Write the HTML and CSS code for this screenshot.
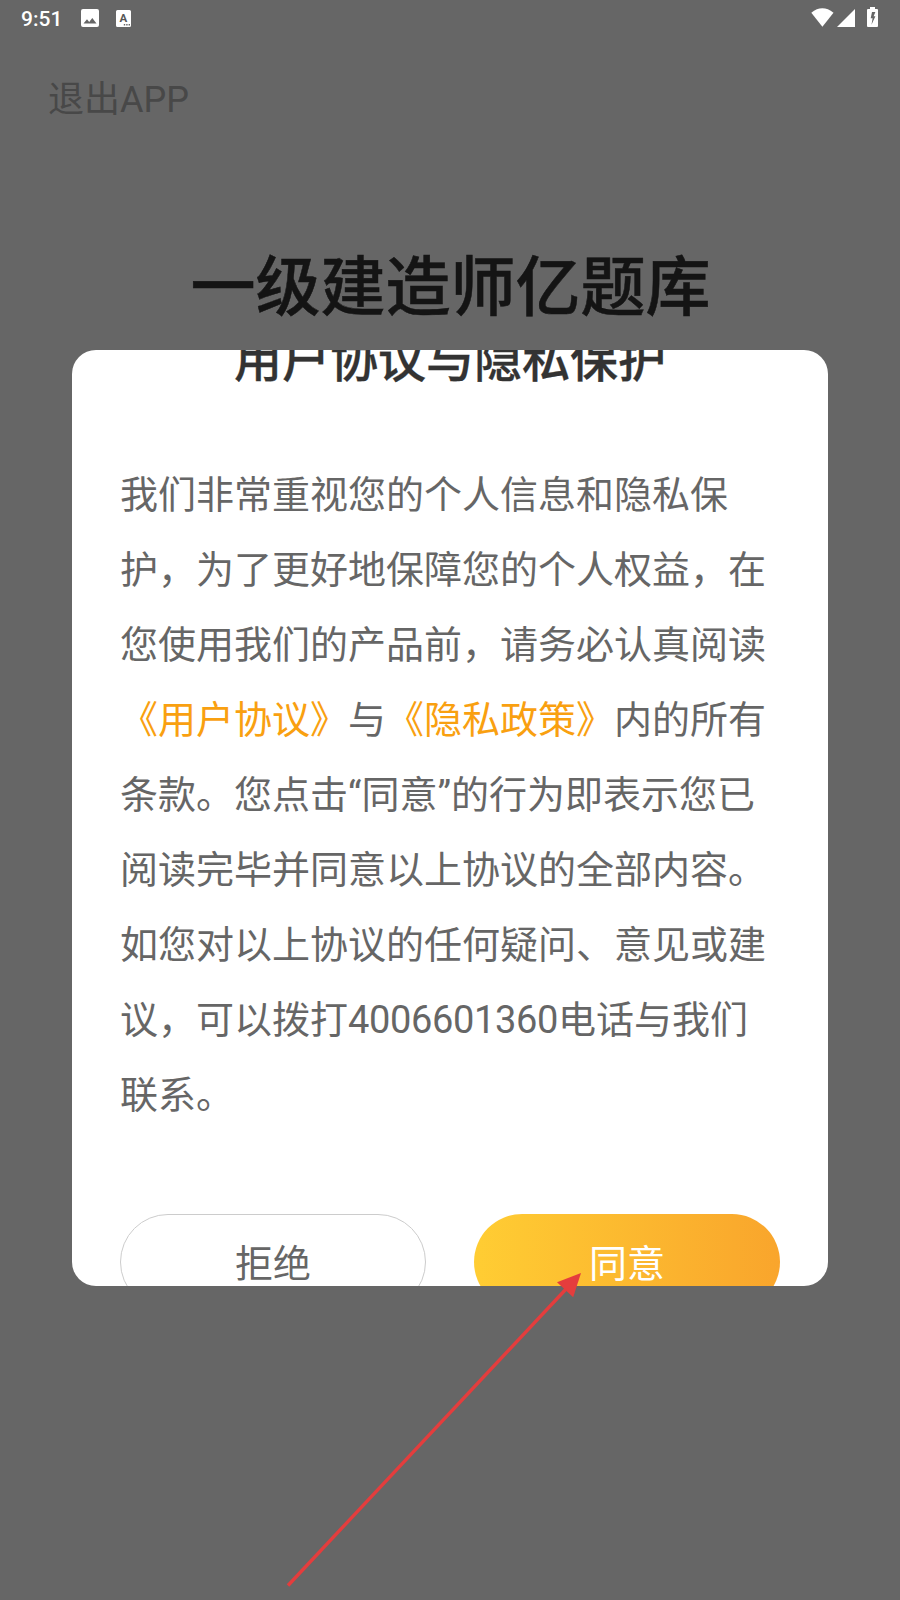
FILE: index.html
```html
<!DOCTYPE html>
<html lang="zh-CN">
  <head>
    <meta charset="UTF-8" />
    <meta name="viewport" content="width=device-width, initial-scale=1.0" />
    <title>一级建造师亿题库</title>

    <link rel="stylesheet" href="styles.css">
  </head>

  <body>
    <div class="screen">
      <header class="status-bar">
        <span class="time">9:51</span>
        <svg class="icon-image" viewBox="0 0 18 18">
          <path fill-rule="evenodd" d="M2 0H16Q18 0 18 2V16Q18 18 16 18H2Q0 18 0 16V2Q0 0 2 0ZM2.5 14.5H15.5L11.3 9L8.2 13L6 10.3Z" />
        </svg>
        <svg class="icon-lang" viewBox="0 0 15 17">
          <path fill-rule="evenodd" d="M1.5 0H13.5Q15 0 15 1.5V15.5Q15 17 13.5 17H1.5Q0 17 0 15.5V1.5Q0 0 1.5 0ZM7.8 14H9.2V15.4H7.8ZM10.2 14H11.6V15.4H10.2ZM12.6 14H14V15.4H12.6Z" />
          <text x="7.3" y="12">A</text>
        </svg>

        <div class="status-right">
          <svg class="icon-wifi" viewBox="0 0 23 19">
            <path d="M.3 4.7Q11.3-4 22.5 4.7L11.4 18.8Z" />
          </svg>
          <svg class="icon-signal" viewBox="0 0 18 18">
            <path d="M18 0V18H0Z" />
          </svg>
          <svg class="icon-battery" viewBox="0 0 11 20">
            <path fill-rule="evenodd" d="M3 0H8V2H10Q11 2 11 3V19Q11 20 10 20H1Q0 20 0 19V3Q0 2 1 2H3ZM5 5L3.7 11.3H5.6L4.5 17.8L8.4 9.3H6.6L8.4 5Z" />
          </svg>
        </div>
      </header>

      <div class="exit">退出APP</div>
      <h1>一级建造师亿题库</h1>

      <div class="dialog">
        <h2>用户协议与隐私保护</h2>
        <p>
          我们非常重视您的个人信息和隐私保<br />护，为了更好地保障您的个人权益，在<br />您使用我们的产品前，请务必认真阅读<br /><a>《用户协议》</a>与<a>《隐私政策》</a>内的所有<br />条款。您点击“同意”的行为即表示您已<br />阅读完毕并同意以上协议的全部内容。<br />如您对以上协议的任何疑问、意见或建<br />议，可以拨打<span class="phone">4006601360</span>电话与我们<br />联系。
        </p>
        <div class="buttons">
          <button class="refuse">拒绝</button>
          <button class="agree">同意</button>
        </div>
      </div>

      <svg class="arrow" viewBox="0 0 300 320">
        <path class="shaft" d="M8 315.5L287 18" />
        <path class="head" d="M301 3L277 12.3L293.2 27.3Z" />
      </svg>
    </div>
  </body>
</html>
```
FILE: styles.css
```css
* {
  box-sizing: border-box;
}

body {
  margin: 0;
  font-family: Roboto, "Noto Sans CJK SC", sans-serif;
}

.screen {
  position: relative;
  width: 900px;
  height: 1600px;
  overflow: hidden;
  display: flex;
  flex-direction: column;
  align-items: center;
  background-color: #666;
}

.status-bar {
  width: 100%;
  height: 36px;
  padding: 0 21px;
  display: flex;
  align-items: center;
  color: #fff;
}

.status-bar svg {
  display: block;
  fill: #fff;
}

.time {
  width: 60px;
  font-size: 21px;
  font-weight: 500;
  line-height: 36px;
  padding-top: 2px;
}

.icon-image {
  width: 18px;
  height: 18px;
}

.icon-lang {
  width: 15px;
  height: 17px;
  margin-left: 17px;
}

.icon-lang text {
  font-size: 11.5px;
  font-weight: 700;
  text-anchor: middle;
  fill: #555;
}

.status-right {
  margin-left: auto;
  margin-top: -2px;
  display: flex;
  align-items: flex-end;
  padding-right: 1px;
}

.icon-wifi {
  width: 23px;
  height: 19px;
}

.icon-signal {
  width: 18px;
  height: 18px;
  margin-left: 3px;
}

.icon-battery {
  width: 11px;
  height: 20px;
  margin-left: 12px;
}

.exit {
  align-self: flex-start;
  margin: 38px 0 0 48px;
  font-size: 36px;
  line-height: 52px;
  color: #484848;
}

h1 {
  margin: 114px 0 0 1px;
  font-size: 65px;
  font-weight: 500;
  line-height: 96px;
  color: #141414;
  -webkit-text-stroke: 0.5px #141414;
}

.dialog {
  width: 756px;
  height: 936px;
  margin-top: 14px;
  padding: 0 48px;
  flex-shrink: 0;
  overflow: hidden;
  border-radius: 24px;
  background-color: #fff;
}

h2 {
  margin: -25px 0 0;
  font-size: 48px;
  font-weight: 500;
  line-height: 72px;
  text-align: center;
  color: #333;
  -webkit-text-stroke: 0.3px #333;
}

p {
  margin: 61px 0 0;
  font-size: 38px;
  line-height: 75px;
  white-space: nowrap;
  color: #666;
}

p a {
  color: #f9a010;
}

.phone {
  letter-spacing: -0.35px;
}

.buttons {
  margin-top: 81px;
  display: flex;
  gap: 48px;
}

button {
  width: 306px;
  height: 96px;
  padding: 0 0 3px;
  border: none;
  border-radius: 48px;
  font-family: inherit;
  font-size: 38px;
}

.refuse {
  border: 1px solid #ccc;
  background-color: #fff;
  color: #666;
}

.agree {
  background: linear-gradient(to right, #ffcd33, #f9a52c);
  color: #fff;
}

/* pointer drawn over the dialog */
.arrow {
  position: absolute;
  left: 280px;
  top: 1270px;
  width: 300px;
  height: 320px;
  overflow: visible;
}

.shaft {
  stroke: #e43d3d;
  stroke-width: 3.4;
}

.head {
  fill: #e43d3d;
}
```
